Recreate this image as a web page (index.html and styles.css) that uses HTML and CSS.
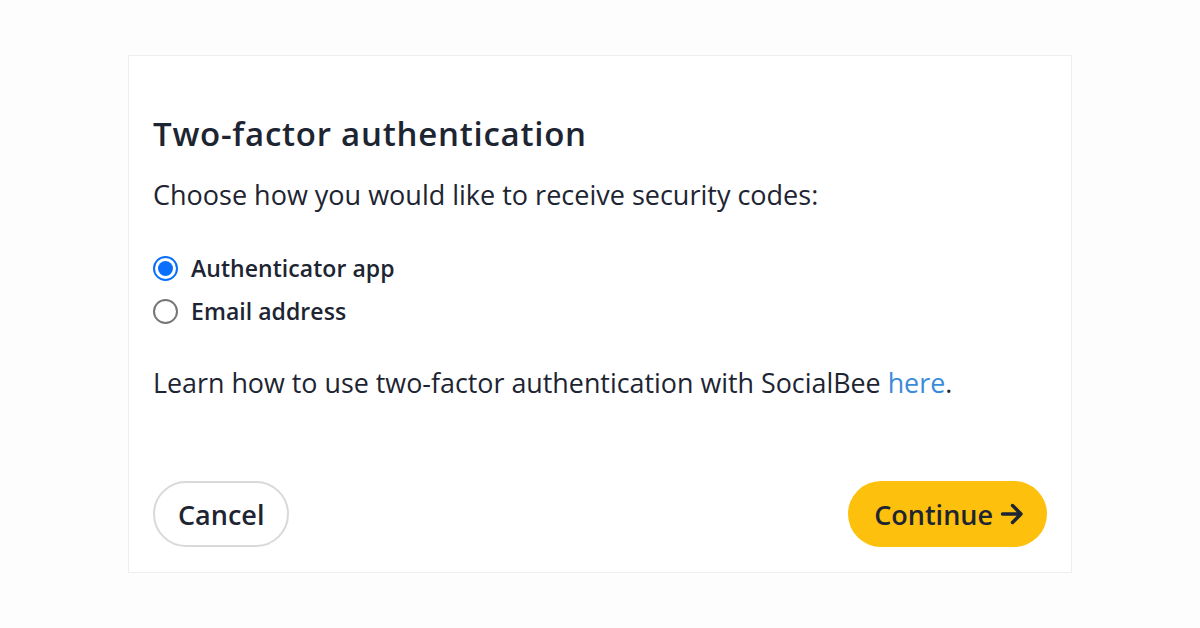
FILE: index.html
```html
<!DOCTYPE html>
<html>
<head>
<meta charset="utf-8">
<link rel="stylesheet" href="styles.css">
</head>
<body>
<div class="page">
  <div class="card">
    <h1 class="title">Two-factor authentication</h1>
    <p class="lead">Choose how you would like to receive security codes:</p>
    <div class="options">
      <label class="option"><span class="radio checked"></span><span class="opt-label">Authenticator app</span></label>
      <label class="option"><span class="radio"></span><span class="opt-label">Email address</span></label>
    </div>
    <p class="learn">Learn how to use two-factor authentication with SocialBee <a class="link" href="#">here</a>.</p>
    <div class="actions">
      <button class="btn btn-cancel">Cancel</button>
      <button class="btn btn-continue">Continue
        <svg class="arrow" viewBox="0 0 24 24" width="24" height="24"><path d="M2.5 12h18.5M12.5 3.5l8.5 8.5-8.5 8.5" fill="none" stroke="currentColor" stroke-width="3.4" stroke-linecap="round" stroke-linejoin="round"/></svg>
      </button>
    </div>
  </div>
</div>
</body>
</html>
```
FILE: styles.css
```css
* { box-sizing: border-box; }
html, body { margin: 0; padding: 0; }
body {
  background: #fdfdfd;
  font-family: "Open Sans", "Noto Sans", sans-serif;
  color: #1d2432;
  width: 1200px;
  height: 628px;
}
.page {
  padding: 55px 128px 0 128px;
}
.card {
  background: #ffffff;
  border: 1px solid #eeeeee;
  height: 518px;
  padding: 0 24px;
  display: flex;
  flex-direction: column;
}
.title {
  margin: 0;
  margin-top: 56px;
  font-size: 33px;
  font-weight: 600;
  line-height: 44px;
  letter-spacing: 0.75px;
}
.lead {
  margin: 21px 0 0 0;
  font-size: 27px;
  line-height: 36px;
}
.options {
  margin-top: 39px;
  display: flex;
  flex-direction: column;
  gap: 11px;
}
.option {
  display: flex;
  align-items: center;
  height: 32px;
}
.radio {
  width: 25px;
  height: 25px;
  border-radius: 50%;
  border: 2px solid #767676;
  background: #fff;
  margin-right: 13px;
  flex: none;
  position: relative;
}
.radio.checked {
  border-color: #0a6ffb;
}
.radio.checked::after {
  content: "";
  position: absolute;
  left: 3px; top: 3px;
  width: 15px; height: 15px;
  border-radius: 50%;
  background: #0a6ffb;
}
.opt-label {
  font-size: 23px;
  font-weight: 600;
  letter-spacing: 0.05px;
}
.learn {
  margin: 38px 0 0 0;
  font-size: 26.85px;
  line-height: 36px;
}
.link {
  color: #3c8bd9;
  text-decoration: none;
}
.actions {
  margin-top: auto;
  margin-bottom: 25px;
  display: flex;
  justify-content: space-between;
  align-items: center;
}
.btn {
  height: 66px;
  border-radius: 33px;
  font-family: "Open Sans", "Noto Sans", sans-serif;
  font-size: 27px;
  font-weight: 600;
  color: #1d2432;
  display: flex;
  align-items: center;
  cursor: pointer;
}
.btn-cancel {
  background: #fff;
  border: 2px solid #d9d9d9;
  padding: 0 23px;
}
.btn-continue {
  background: #fdc00c;
  border: none;
  padding: 0 23px 0 26px;
  gap: 7px;
}
.arrow { display: block; }
```
